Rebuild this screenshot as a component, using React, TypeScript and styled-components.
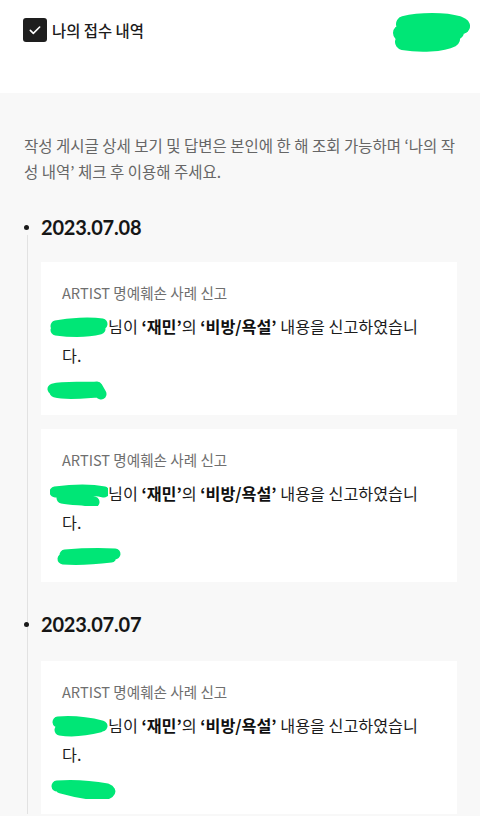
import styled, { createGlobalStyle } from "styled-components";

const GlobalStyle = createGlobalStyle`
  html, body {
    margin: 0;
    padding: 0;
    background: #f8f8f8;
  }
  body {
    font-family: "Noto Sans CJK KR", "Noto Sans", sans-serif;
    color: #222;
    -webkit-font-smoothing: antialiased;
  }
`;

const GREEN = "#00e676";

const Page = styled.div`
  width: 480px;
  min-height: 816px;
  background: #f8f8f8;
`;

const Header = styled.header`
  display: flex;
  align-items: flex-start;
  justify-content: space-between;
  height: 93px;
  box-sizing: border-box;
  padding: 12px 8px 0 23px;
  background: #fff;
`;

const CheckLabel = styled.label`
  display: flex;
  align-items: center;
  gap: 5px;
  margin-top: 6px;
  font-size: 15.4px;
  font-weight: 500;
  color: #1b1b1b;
`;

const CheckBox = styled.span`
  display: flex;
  align-items: center;
  justify-content: center;
  width: 24px;
  height: 24px;
  border-radius: 3px;
  background: #1e1e1e;
`;

const Body = styled.main`
  padding: 0 23px 0 24px;
`;

const Notice = styled.p`
  margin: 0;
  padding-top: 39px;
  font-size: 15.5px;
  line-height: 26px;
  color: #666;
`;

const Timeline = styled.div`
  position: relative;
  margin: 31px 0 0 3px;
  padding-left: 14px;
  &::before {
    content: "";
    position: absolute;
    left: 0;
    top: 20px;
    bottom: 0;
    width: 1px;
    background: #e2e2e2;
  }
`;

const Group = styled.section<{ $first?: boolean }>`
  margin-top: ${(p) => (p.$first ? 0 : 30)}px;
`;

const DateRow = styled.h2<{ $first?: boolean }>`
  position: relative;
  margin: 0 0 ${(p) => (p.$first ? 23 : 25)}px;
  font-family: Lato, "Noto Sans", sans-serif;
  font-size: 20px;
  line-height: 24px;
  font-weight: 700;
  color: #161616;
  letter-spacing: -0.2px;
`;

const Dot = styled.span`
  position: absolute;
  left: -17px;
  top: 10px;
  width: 5px;
  height: 5px;
  border-radius: 50%;
  background: #1a1a1a;
`;

const Cards = styled.div`
  display: flex;
  flex-direction: column;
  gap: 14px;
`;

const Card = styled.article`
  background: #fff;
  padding: 21px 30px 15px 21px;
`;

const CardTitle = styled.div`
  font-size: 14.6px;
  line-height: 20px;
  color: #6f6f6f;
`;

const CardText = styled.p`
  margin: 9px 0 0;
  font-size: 16.2px;
  line-height: 29px;
  color: #1c1c1c;
`;

const Em = styled.strong`
  font-weight: 700;
  color: #111;
`;

const NameRedact = styled.span`
  display: inline-block;
  width: 58px;
  height: 22px;
  margin-left: -12px;
  vertical-align: -6px;
`;

const DateRedact = styled.div`
  height: 20px;
  margin: 10px 0 0 -15px;
`;

type Report = { name: number; date: number };

const groups: { date: string; reports: Report[] }[] = [
  { date: "2023.07.08", reports: [{ name: 0, date: 0 }, { name: 1, date: 1 }] },
  { date: "2023.07.07", reports: [{ name: 2, date: 2 }] },
];

const namePaths = [
  "M6 9 C 20 6, 40 5, 52 7 M 6 13 C 20 15, 38 15, 50 12",
  "M5 8 C 20 6, 40 5, 54 8 M 12 14 C 24 16, 38 16, 44 18",
  "M8 6 C 20 5, 36 6, 52 10 M 10 14 C 22 16, 38 14, 50 11",
];

const datePaths = [
  "M6 9 C 18 6, 34 8, 50 7 L 54 14 M 8 12 C 20 15, 36 13, 50 12",
  "M18 8 C 30 7, 50 6, 68 7 M 16 12 C 30 13, 48 12, 64 10",
  "M10 7 C 24 6, 44 7, 60 10 C 66 12, 62 16, 52 16 C 40 15, 28 13, 14 9",
];

function Scribble({ d, width, height }: { d: string; width: number; height: number }) {
  return (
    <svg width={width} height={height} viewBox={`0 0 ${width} ${height}`}>
      <path d={d} fill="none" stroke={GREEN} strokeWidth={11} strokeLinecap="round" strokeLinejoin="round" />
    </svg>
  );
}

function App() {
  return (
    <Page>
      <GlobalStyle />
      <Header>
        <CheckLabel>
          <CheckBox>
            <svg width="16" height="16" viewBox="0 0 24 24">
              <path d="M5 12.5l4.5 4.5L19 7.5" fill="none" stroke="#fff" strokeWidth="2.4" strokeLinecap="round" strokeLinejoin="round" />
            </svg>
          </CheckBox>
          나의 접수 내역
        </CheckLabel>
        <svg width="82" height="42" viewBox="0 0 82 42">
          <path
            d="M14 12 C 30 8, 55 8, 68 12 L 72 14 M 11 21 C 30 21, 56 21, 66 20 M 13 30 C 30 33, 52 32, 62 27"
            fill="none"
            stroke={GREEN}
            strokeWidth={16}
            strokeLinecap="round"
            strokeLinejoin="round"
          />
          <circle cx="73" cy="15" r="6.5" fill={GREEN} />
        </svg>
      </Header>
      <Body>
        <Notice>
          작성 게시글 상세 보기 및 답변은 본인에 한 해 조회 가능하며 ‘나의 작성 내역’ 체크 후 이용해 주세요.
        </Notice>
        <Timeline>
          {groups.map((g, i) => (
            <Group key={g.date} $first={i === 0}>
              <DateRow $first={i === 0}>
                <Dot />
                {g.date}
              </DateRow>
              <Cards>
                {g.reports.map((r, j) => (
                  <Card key={j}>
                    <CardTitle>ARTIST 명예훼손 사례 신고</CardTitle>
                    <CardText>
                      <NameRedact>
                        <Scribble d={namePaths[r.name]} width={58} height={22} />
                      </NameRedact>
                      님이 <Em>‘재민’</Em>의 <Em>‘비방/욕설’</Em> 내용을 신고하였습니다.
                    </CardText>
                    <DateRedact>
                      <Scribble d={datePaths[r.date]} width={76} height={20} />
                    </DateRedact>
                  </Card>
                ))}
              </Cards>
            </Group>
          ))}
        </Timeline>
      </Body>
    </Page>
  );
}

export default App;
